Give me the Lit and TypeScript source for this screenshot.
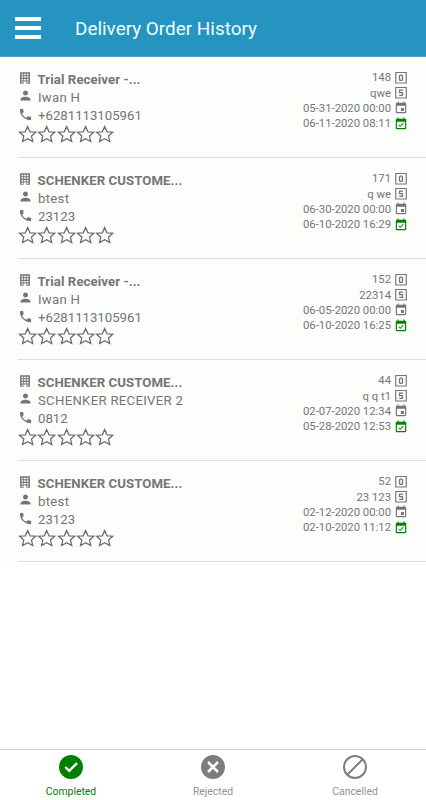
import { LitElement, html, css, svg } from "lit";
import { customElement, property } from "lit/decorators.js";

interface Order {
  company: string;
  person: string;
  phone: string;
  order: string;
  shipment: string;
  planned: string;
  done: string;
}

const ORDERS: Order[] = [
  { company: "Trial Receiver -...", person: "Iwan H", phone: "+6281113105961", order: "148", shipment: "qwe", planned: "05-31-2020 00:00", done: "06-11-2020 08:11" },
  { company: "SCHENKER CUSTOME...", person: "btest", phone: "23123", order: "171", shipment: "q we", planned: "06-30-2020 00:00", done: "06-10-2020 16:29" },
  { company: "Trial Receiver -...", person: "Iwan H", phone: "+6281113105961", order: "152", shipment: "22314", planned: "06-05-2020 00:00", done: "06-10-2020 16:25" },
  { company: "SCHENKER CUSTOME...", person: "SCHENKER RECEIVER 2", phone: "0812", order: "44", shipment: "q q t1", planned: "02-07-2020 12:34", done: "05-28-2020 12:53" },
  { company: "SCHENKER CUSTOME...", person: "btest", phone: "23123", order: "52", shipment: "23 123", planned: "02-12-2020 00:00", done: "02-10-2020 11:12" },
];

const ICONS = {
  building: svg`<path fill-rule="evenodd" d="M3.500 2h17v20h-6v-4h-5v4h-6zM6 4.500v2.600h3V4.500zm4.500 0v2.600h3V4.500zm4.500 0v2.600h3V4.500zM6 9v2.600h3V9zm4.500 0v2.600h3V9zm4.500 0v2.600h3V9zM6 13.500v2.600h3v-2.600zm4.500 0v2.600h3v-2.600zm4.500 0v2.600h3v-2.600zM6 18v2.500h2V18zm10 0v2.500h2V18z"/>`,
  person: svg`<path d="M12 12c2.210 0 4-1.790 4-4s-1.790-4-4-4-4 1.790-4 4 1.790 4 4 4zm0 2c-2.670 0-8 1.340-8 4v2h16v-2c0-2.660-5.330-4-8-4z"/>`,
  phone: svg`<path d="M6.620 10.790c1.440 2.830 3.760 5.140 6.590 6.590l2.200-2.200c.27-.27.67-.36 1.020-.24 1.120.37 2.330.57 3.570.57.55 0 1 .45 1 1V20c0 .55-.45 1-1 1-9.390 0-17-7.610-17-17 0-.55.45-1 1-1h3.500c.55 0 1 .45 1 1 0 1.250.2 2.450.57 3.570.11.35.03.74-.25 1.020l-2.200 2.200z"/>`,
  order: svg`<path fill="none" stroke="currentColor" stroke-width="2" d="M3 2.500h18v18H3z"/><rect x="9.500" y="7" width="5" height="9" rx="1.500" fill="none" stroke="currentColor" stroke-width="2.200"/>`,
  shipment: svg`<path fill="none" stroke="currentColor" stroke-width="2" d="M3 2.500h18v18H3z"/><path fill="none" stroke="currentColor" stroke-width="2.200" d="M15.500 7h-6v4.500h5V16H9"/>`,
  event: svg`<path d="M17 12h-5v5h5v-5zM16 1v2H8V1H6v2H5c-1.110 0-1.990.9-1.990 2L3 19c0 1.100.89 2 2 2h14c1.100 0 2-.9 2-2V5c0-1.100-.9-2-2-2h-1V1h-2zm3 18H5V8h14v11z"/>`,
  eventDone: svg`<path d="M16.530 11.060 15.470 10l-4.880 4.880-2.120-2.120-1.060 1.060L10.590 17l5.940-5.940zM19 3h-1V1h-2v2H8V1H6v2H5c-1.110 0-1.990.9-1.990 2L3 19c0 1.100.89 2 2 2h14c1.100 0 2-.9 2-2V5c0-1.100-.9-2-2-2zm0 16H5V8h14v11z"/>`,
  completed: svg`<circle cx="12" cy="12" r="12"/><path fill="none" stroke="#fff" stroke-width="2.400" d="m6.300 12 3.900 3.900 7.800-7.800"/>`,
  rejected: svg`<circle cx="12" cy="12" r="12"/><path fill="none" stroke="#fff" stroke-width="2.500" d="m7 7 10 10M17 7 7 17"/>`,
  cancelled: svg`<circle cx="12" cy="12" r="11" fill="none" stroke="currentColor" stroke-width="2"/><path fill="none" stroke="currentColor" stroke-width="2" d="M19.500 4.500l-15 15"/>`,
};

const icon = (name: keyof typeof ICONS, cls = "icon") =>
  html`<svg class=${cls} viewBox="0 0 24 24" fill="currentColor" aria-hidden="true">${ICONS[name]}</svg>`;

const star = html`<svg class="star" viewBox="0 0 20 20" aria-hidden="true">
  <path fill="none" stroke="currentColor" stroke-width="1.300" d="M10 2.200L12.450 7.700L18.400 8.100L14 12.100L15.300 17.800L10 14.900L4.700 17.800L6 12.100L1.600 8.100L7.550 7.700z" />
</svg>`;

@customElement("order-row")
export class OrderRow extends LitElement {
  @property({ attribute: false }) order!: Order;

  static styles = css`
    :host {
      display: flex;
      justify-content: space-between;
      box-sizing: border-box;
      height: 101px;
      margin-left: 18px;
      padding: 13px 18px 0 0;
      border-bottom: 1px solid #dcdddc;
      color: #757575;
    }
    .line {
      display: flex;
      align-items: center;
      height: 18.300px;
      font-size: 13.200px;
      white-space: nowrap;
    }
    .line .icon {
      width: 15px;
      height: 15px;
      margin: -3px 5px 0 0;
    }
    .company { font-weight: 700; letter-spacing: 0.080px; }
    .company .icon { width: 14px; height: 14px; margin-right: 5.500px; }
    .person { letter-spacing: 0.280px; }
    .stars { display: flex; margin-top: -1px; }
    .star { width: 19.300px; height: 20px; color: #6b6b6b; overflow: visible; }
    .meta {
      display: flex;
      align-items: center;
      justify-content: flex-end;
      gap: 3px;
      height: 15.400px;
      font-size: 11.300px;
      white-space: nowrap;
    }
    .meta .icon { width: 14px; height: 14px; }
    .done .icon { color: #008000; }
  `;

  render() {
    const o = this.order;
    return html`
      <div>
        <div class="line company">${icon("building")}${o.company}</div>
        <div class="line person">${icon("person")}${o.person}</div>
        <div class="line">${icon("phone")}${o.phone}</div>
        <div class="stars">${[0, 1, 2, 3, 4].map(() => star)}</div>
      </div>
      <div>
        <div class="meta">${o.order}${icon("order")}</div>
        <div class="meta">${o.shipment}${icon("shipment")}</div>
        <div class="meta">${o.planned}${icon("event")}</div>
        <div class="meta done">${o.done}${icon("eventDone")}</div>
      </div>
    `;
  }
}

@customElement("app-root")
export class AppRoot extends LitElement {
  static styles = css`
    :host {
      display: flex;
      flex-direction: column;
      height: 100vh;
      background: #fff;
      font-family: Roboto, sans-serif;
    }
    .bar {
      display: flex;
      align-items: center;
      box-sizing: border-box;
      flex: none;
      height: 57px;
      padding-left: 15px;
      background: #2594c1;
      border-bottom: 1px solid #4ba3c7;
      color: #fff;
    }
    .menu { display: flex; flex-direction: column; gap: 5px; width: 26px; margin-right: 34px; }
    .menu i { height: 4px; border-radius: 0.500px; background: #fff; }
    .title { margin: 1px 0 0; font-size: 18.900px; font-weight: 400; color: #f0fcff; }
    .list { flex: 1; }
    .rows { background: #fcfefc; }
    .tabs {
      display: grid;
      grid-template-columns: repeat(3, 1fr);
      box-sizing: border-box;
      height: 51px;
      border-top: 1px solid #d2d2d2;
    }
    .tab {
      display: flex;
      flex-direction: column;
      align-items: center;
      padding-top: 5px;
      font-size: 10.400px;
      line-height: 14px;
      color: #929292;
    }
    .tab.active { color: #008000; }
    .tab-icon { width: 24px; height: 24px; margin-bottom: 6px; color: #7d7d7d; }
    .active .tab-icon { color: #008000; }
  `;

  render() {
    return html`
      <header class="bar">
        <div class="menu"><i></i><i></i><i></i></div>
        <h1 class="title">Delivery Order History</h1>
      </header>
      <main class="list">
        <div class="rows">${ORDERS.map((o) => html`<order-row .order=${o}></order-row>`)}</div>
      </main>
      <nav class="tabs">
        <div class="tab active">${icon("completed", "tab-icon")}<span>Completed</span></div>
        <div class="tab">${icon("rejected", "tab-icon")}<span>Rejected</span></div>
        <div class="tab">${icon("cancelled", "tab-icon")}<span>Cancelled</span></div>
      </nav>
    `;
  }
}
